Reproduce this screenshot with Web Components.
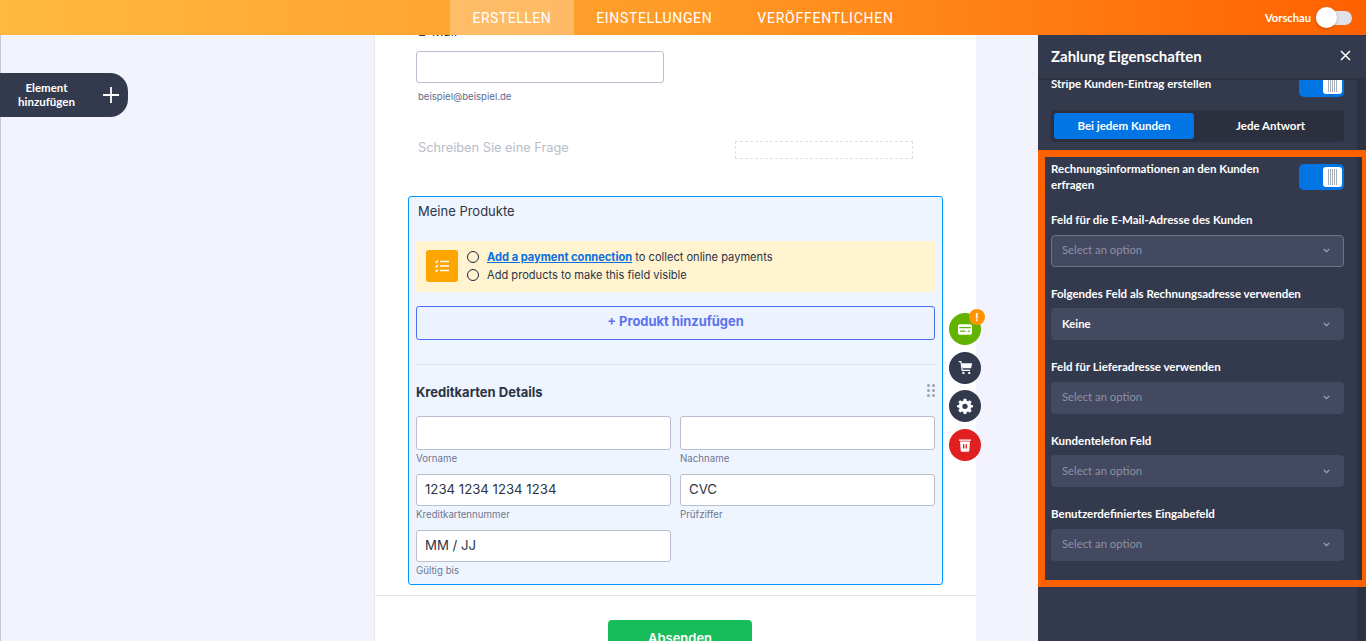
<!DOCTYPE html>
<html lang="de">
<head>
<meta charset="utf-8">
<title>Formular</title>
<style>
  html, body { margin: 0; height: 100%; overflow: hidden; }
  body { font-family: "Inter", "Liberation Sans", sans-serif; background: #f3f3fe; }
</style>
</head>
<body>
<app-shell>
  <top-bar slot="top"></top-bar>
  <add-element slot="add"></add-element>
  <form-card slot="main"></form-card>
  <props-panel slot="side"></props-panel>
</app-shell>

<script>
const PANEL_FONT = '"Lato", "Noto Sans", sans-serif';

class AppShell extends HTMLElement {
  constructor() {
    super();
    this.attachShadow({ mode: "open" }).innerHTML = `
      <style>
        :host { display: grid; grid-template: 35px 606px / 1038px 328px; width: 1366px; height: 641px; overflow: hidden; }
        .top { grid-column: 1 / 3; }
        .main { position: relative; overflow: hidden; padding-left: 375px; box-sizing: border-box; background: #f3f3fe; box-shadow: inset 1px 0 0 #c5c8d6; }
      </style>
      <div class="top"><slot name="top"></slot></div>
      <div class="main"><slot name="add"></slot><slot name="main"></slot></div>
      <slot name="side"></slot>`;
  }
}

class TopBar extends HTMLElement {
  constructor() {
    super();
    this.attachShadow({ mode: "open" }).innerHTML = `
      <style>
        :host { display: flex; height: 35px; background: linear-gradient(90deg, #ffb93f 0%, #ff9a27 50%, #ff6100 100%); font-family: Roboto, sans-serif; color: #fff; position: relative; }
        nav { display: flex; margin-left: 450px; }
        a { display: flex; align-items: center; padding: 0 22.5px; font-size: 14px; letter-spacing: .65px; }
        a.on { background: rgba(255,255,255,.28); letter-spacing: .5px; }
        a:last-child { letter-spacing: .75px; }
        .preview { margin-left: auto; margin-right: 14px; display: flex; align-items: center; gap: 5px; font: 700 11.2px ${PANEL_FONT}; }
        .track { display: block; width: 36px; height: 14px; border-radius: 7px; background: #dfe2ea; position: relative; }
        .knob { position: absolute; left: 0; top: -3.5px; width: 21px; height: 21px; border-radius: 50%; background: #fff; box-shadow: 0 1px 3px rgba(0,0,0,.25); }
      </style>
      <nav><a class="on">ERSTELLEN</a><a>EINSTELLUNGEN</a><a>VERÖFFENTLICHEN</a></nav>
      <div class="preview">Vorschau<span class="track"><span class="knob"></span></span></div>`;
  }
}

class AddElement extends HTMLElement {
  constructor() {
    super();
    this.attachShadow({ mode: "open" }).innerHTML = `
      <style>
        :host { position: absolute; left: 0; top: 38px; width: 128px; height: 44px; display: flex; align-items: center; background: #343a4d; border-radius: 0 18px 18px 0; color: #fff; font: 700 11.5px/14px ${PANEL_FONT}; }
        span { width: 93px; text-align: center; }
        svg { margin-left: 9px; }
      </style>
      <span>Element<br>hinzufügen</span>
      <svg width="18" height="18" viewBox="0 0 18 18"><path d="M9 1v16M1 9h16" stroke="#fff" stroke-width="1.8"/></svg>`;
  }
}

class CardField extends HTMLElement {
  constructor() {
    super();
    const h = this.getAttribute("height") || "32";
    this.attachShadow({ mode: "open" }).innerHTML = `
      <style>
        :host { display: block; }
        .box { box-sizing: border-box; height: ${h}px; background: #fff; border: 1px solid #b8bdcf; border-radius: 3px; display: flex; align-items: center; padding: 0 0 2px 8px; font-size: 13.2px; color: #2c3345; }
        .lab { margin-top: 2px; font-size: 9.7px; line-height: 14px; color: #6f7690; }
      </style>
      <div class="box">${this.getAttribute("value") || ""}</div>
      <div class="lab">${this.getAttribute("label") || ""}</div>`;
  }
}

class PaymentNotice extends HTMLElement {
  constructor() {
    super();
    this.attachShadow({ mode: "open" }).innerHTML = `
      <style>
        :host { display: flex; align-items: center; box-sizing: border-box; height: 51px; background: #fff3d0; border-radius: 3px; padding: 0 0 1px 10px; color: #2c3345; font-size: 11.1px; }
        .ico { width: 32px; height: 32px; background: #ffa500; border-radius: 3px; display: flex; align-items: center; justify-content: center; }
        ul { list-style: none; margin: 0 0 0 9px; padding: 0; display: grid; gap: 4px; }
        li { display: flex; align-items: center; gap: 8px; line-height: 14px; }
        i { box-sizing: border-box; width: 12px; height: 12px; border: 1.2px solid #1d2340; border-radius: 50%; }
        a { color: #0a6fe0; font-weight: 700; text-decoration: underline; }
      </style>
      <div class="ico">
        <svg width="14" height="12" viewBox="0 0 14 12" fill="none" stroke="#fff" stroke-width="1.3">
          <path d="M5 1.500h9M5 6h9M5 10.500h9M.5 1.500l1 1 1.500-2M.5 6l1 1 1.500-2M.5 10.500l1 1 1.500-2"/>
        </svg>
      </div>
      <ul>
        <li><i></i><span><a>Add a payment connection</a> to collect online payments</span></li>
        <li><i></i><span>Add products to make this field visible</span></li>
      </ul>`;
  }
}

class SideActions extends HTMLElement {
  constructor() {
    super();
    this.attachShadow({ mode: "open" }).innerHTML = `
      <style>
        :host { position: absolute; left: 540px; top: 116px; display: grid; gap: 6.7px; width: 32px; }
        .c { width: 32px; height: 32px; border-radius: 50%; background: #343a4d; display: flex; align-items: center; justify-content: center; position: relative; }
        .g { background: #64b200; }
        .r { background: #e02020; }
        .badge { position: absolute; right: -4px; top: -4px; width: 16px; height: 16px; border-radius: 50%; background: #ff9400; color: #fff; font: 700 10px/16px "Inter", sans-serif; text-align: center; }
      </style>
      <div class="c g">
        <svg width="14" height="11" viewBox="0 0 16 12"><path fill="#fff" fill-rule="evenodd" d="M2 0h12a2 2 0 0 1 2 2v8a2 2 0 0 1-2 2H2a2 2 0 0 1-2-2V2a2 2 0 0 1 2-2zM1.500 3v1.500h13V3zM2.500 7v1.500h6V7zM11 7v1.500h2.500V7z"/></svg>
        <span class="badge">!</span>
      </div>
      <div class="c">
        <svg width="15" height="15" viewBox="0 0 18 18"><path fill="none" stroke="#fff" stroke-width="1.4" d="M1 2h2.500L5 12.500h9.500"/><path fill="#fff" d="M4.500 4H17l-1.300 6H5.300z"/><circle cx="6.500" cy="15.500" r="1.400" fill="#fff"/><circle cx="13.500" cy="15.500" r="1.400" fill="#fff"/></svg>
      </div>
      <div class="c">
        <svg width="16" height="16" viewBox="0 0 24 24"><path fill="#fff" fill-rule="evenodd" d="M10 1h4l.6 3.100 1.900.8L19.200 3.200l2.800 2.800-1.700 2.700.8 1.900L24 11v3l-2.900.6-.8 1.900 1.700 2.700-2.800 2.800-2.700-1.700-1.900.8L14 24h-4l-.6-3.100-1.900-.8-2.700 1.700L2 19l1.700-2.700-.8-1.900L0 14v-3l2.900-.6.8-1.900L2 5.800l2.800-2.600 2.700 1.700 1.900-.8zM12 8.500a4 4 0 1 0 0 8 4 4 0 0 0 0-8z"/></svg>
      </div>
      <div class="c r">
        <svg width="12" height="14" viewBox="0 0 14 16"><path fill="#fff" d="M0 1.500h14V3H0zM1.200 4h11.600l-.8 10.500a1.500 1.500 0 0 1-1.500 1.500H3.500A1.500 1.500 0 0 1 2 14.500z"/><path fill="#e02020" d="M4.700 7h1.600v5H4.700zM7.700 7h1.600v5H7.700z"/></svg>
      </div>`;
  }
}

class FormCard extends HTMLElement {
  constructor() {
    super();
    this.attachShadow({ mode: "open" }).innerHTML = `
      <style>
        :host { display: block; box-sizing: border-box; width: 601px; height: 640px; margin-top: -10px; background: #fff; box-shadow: -1px 0 0 #e6e8f2; color: #2c3345; font-family: "Inter", "Liberation Sans", sans-serif; }
        .email { padding: 0 0 0 43px; height: 26px; box-sizing: border-box; font-size: 13px; line-height: 13px; }
        .mail-box { box-sizing: border-box; margin-left: 41px; width: 248px; height: 32px; border: 1px solid #b8bdcf; border-radius: 3px; }
        .hint { margin: 7px 0 0 43px; font-size: 9.6px; line-height: 14px; color: #5f6a8c; }
        .question { display: flex; align-items: flex-start; height: 18px; margin: 37px 0 0 43px; font-size: 12.8px; line-height: 14px; color: #b8bcc8; }
        .question div { box-sizing: border-box; margin-left: auto; margin-right: 63px; width: 178px; height: 18px; border: 1px dashed #dfe1e8; }
        .sel { position: relative; box-sizing: border-box; width: 535px; height: 389px; margin: 37px 0 0 33px; padding: 0 7px; background: #eef5ff; border: 1px solid #0099ff; border-radius: 3px; }
        .sel > h3 { margin: 0; padding: 7px 0 0 2px; height: 36px; box-sizing: border-box; font-weight: 400; font-size: 13px; line-height: 14px; }
        payment-notice { margin-top: 8px; }
        .add { box-sizing: border-box; height: 34px; margin-top: 14px; padding-bottom: 3px; border: 1px solid #4d6ff0; border-radius: 3px; background: #edf2ff; color: #5b72ee; font-weight: 700; font-size: 12.9px; display: flex; align-items: center; justify-content: center; }
        hr { border: 0; border-top: 1px solid #dde2ee; margin: 24px 0 0; }
        h2 { margin: 19px 0 0; font-size: 13px; line-height: 16px; font-weight: 700; }
        .grip { position: absolute; right: 7px; top: 187px; display: grid; grid-template-columns: 3px 3px; gap: 2px; }
        .grip b { width: 3px; height: 3px; border-radius: 50%; background: #9aa2b8; }
        .grid { display: grid; grid-template-columns: 255px 255px; column-gap: 9px; row-gap: 8px; margin-top: 16px; }
        .foot { height: 0; border-top: 1px solid #e3e5ec; margin-top: 10px; }
        .submit { box-sizing: border-box; display: flex; justify-content: center; width: 144px; height: 40px; margin: 24px 0 0 233px; padding-top: 11px; line-height: 14px; background: #18bd5b; border-radius: 4px; color: #fff; font-weight: 600; font-size: 13px; }
      </style>
      <div class="email">E-Mail</div>
      <div class="mail-box"></div>
      <div class="hint">beispiel@beispiel.de</div>
      <div class="question">Schreiben Sie eine Frage<div></div></div>
      <div class="sel">
        <h3>Meine Produkte</h3>
        <payment-notice></payment-notice>
        <div class="add">+ Produkt hinzufügen</div>
        <hr>
        <h2>Kreditkarten Details</h2>
        <div class="grip"><b></b><b></b><b></b><b></b><b></b><b></b></div>
        <div class="grid">
          <card-field height="34" label="Vorname"></card-field>
          <card-field height="34" label="Nachname"></card-field>
          <card-field value="1234 1234 1234 1234" label="Kreditkartennummer"></card-field>
          <card-field value="CVC" label="Prüfziffer"></card-field>
          <card-field value="MM / JJ" label="Gültig bis"></card-field>
        </div>
        <side-actions></side-actions>
      </div>
      <div class="foot"></div>
      <div class="submit">Absenden</div>`;
  }
}

class PanelToggle extends HTMLElement {
  constructor() {
    super();
    this.attachShadow({ mode: "open" }).innerHTML = `
      <style>
        :host { display: flex; align-items: center; justify-content: flex-end; flex: none; box-sizing: border-box; width: 45px; height: 26px; padding-right: 2px; background: #0075e3; border-radius: 5px; }
        div { width: 19px; height: 20px; border-radius: 3px; background: #fff; display: flex; justify-content: center; align-items: center; }
        b { display: block; width: 9px; height: 16px; background: repeating-linear-gradient(90deg, #a8adba 0 1px, #fff 1px 2px); }
      </style>
      <div><b></b></div>`;
  }
}

class SelectField extends HTMLElement {
  constructor() {
    super();
    const value = this.getAttribute("value");
    const focus = this.hasAttribute("focused");
    this.attachShadow({ mode: "open" }).innerHTML = `
      <style>
        :host { display: block; margin-top: 20px; font-family: ${PANEL_FONT}; }
        .lab { font-weight: 700; font-size: 11.5px; line-height: 14px; color: #fff; margin-bottom: 7.5px; }
        .sel { box-sizing: border-box; height: 32px; display: flex; align-items: center; justify-content: space-between; padding: 0 ${focus ? 13 : 14}px 0 ${focus ? 10 : 11}px; background: #434960; border-radius: 4px; font-size: 11.3px; border: ${focus ? "1px solid #6c7288" : "0"}; color: ${value ? "#fff" : "#8c92a5"}; font-weight: ${value ? 700 : 400}; }
        .sel span { padding-bottom: 2px; }
      </style>
      <div class="lab"><slot></slot></div>
      <div class="sel"><span>${value || "Select an option"}</span>
        <svg width="7" height="5" viewBox="0 0 9 6"><path d="M1 1l3.500 3.500L8 1" fill="none" stroke="#9aa0b2" stroke-width="1.600"/></svg>
      </div>`;
  }
}

class PropsPanel extends HTMLElement {
  constructor() {
    super();
    this.attachShadow({ mode: "open" }).innerHTML = `
      <style>
        :host { display: flex; flex-direction: column; background: #343a4d; color: #fff; font-family: ${PANEL_FONT}; }
        header { flex: none; box-sizing: border-box; height: 45px; display: flex; align-items: center; justify-content: space-between; padding: 0 15px 2px 13px; border-bottom: 2px solid #2d3140; font-weight: 700; font-size: 15px; }
        .body { position: relative; flex: 1; overflow: hidden; display: grid; grid-template-columns: 319px 9px; }
        .strip { background: #2d3140; }
        .scroll { box-sizing: border-box; padding: 0 13px; margin-top: -9px; }
        .row { display: flex; justify-content: space-between; align-items: flex-start; font-weight: 700; font-size: 11.5px; line-height: 16px; }
        .row span { padding-top: 5px; }
        .row.bill { margin-top: 22px; }
        .row.bill span { padding-top: 0; width: 225px; margin-top: -3px; }
        .seg { display: grid; grid-template-columns: 140px 1fr; box-sizing: border-box; height: 32px; margin-top: 13px; padding: 3px; background: #2b2f3e; border-radius: 4px; font-weight: 700; font-size: 11.5px; }
        .seg div { display: flex; align-items: center; justify-content: center; border-radius: 3px; padding-bottom: 2px; }
        .seg div + div { padding-left: 6px; }
        .seg .on { background: #0075e3; }
        .fields { padding-top: .4px; }
        .mark { position: absolute; left: 0; right: 0; top: 70px; height: 437px; box-sizing: border-box; border: 7px solid #ff6100; border-right-width: 4px; pointer-events: none; }
      </style>
      <header>Zahlung Eigenschaften
        <svg width="11" height="11" viewBox="0 0 11 11"><path d="M1 1l9 9M10 1l-9 9" stroke="#fff" stroke-width="1.500"/></svg>
      </header>
      <div class="body">
        <div class="scroll">
          <div class="row"><span>Stripe Kunden-Eintrag erstellen</span><panel-toggle></panel-toggle></div>
          <div class="seg"><div class="on">Bei jedem Kunden</div><div>Jede Antwort</div></div>
          <div class="row bill"><span>Rechnungsinformationen an den Kunden erfragen</span><panel-toggle></panel-toggle></div>
          <div class="fields">
            <select-field focused>Feld für die E-Mail-Adresse des Kunden</select-field>
            <select-field value="Keine">Folgendes Feld als Rechnungsadresse verwenden</select-field>
            <select-field>Feld für Lieferadresse verwenden</select-field>
            <select-field>Kundentelefon Feld</select-field>
            <select-field>Benutzerdefiniertes Eingabefeld</select-field>
          </div>
        </div>
        <div class="strip"></div>
        <div class="mark"></div>
      </div>`;
  }
}

customElements.define("card-field", CardField);
customElements.define("payment-notice", PaymentNotice);
customElements.define("side-actions", SideActions);
customElements.define("panel-toggle", PanelToggle);
customElements.define("select-field", SelectField);
customElements.define("top-bar", TopBar);
customElements.define("add-element", AddElement);
customElements.define("form-card", FormCard);
customElements.define("props-panel", PropsPanel);
customElements.define("app-shell", AppShell);
</script>
</body>
</html>
